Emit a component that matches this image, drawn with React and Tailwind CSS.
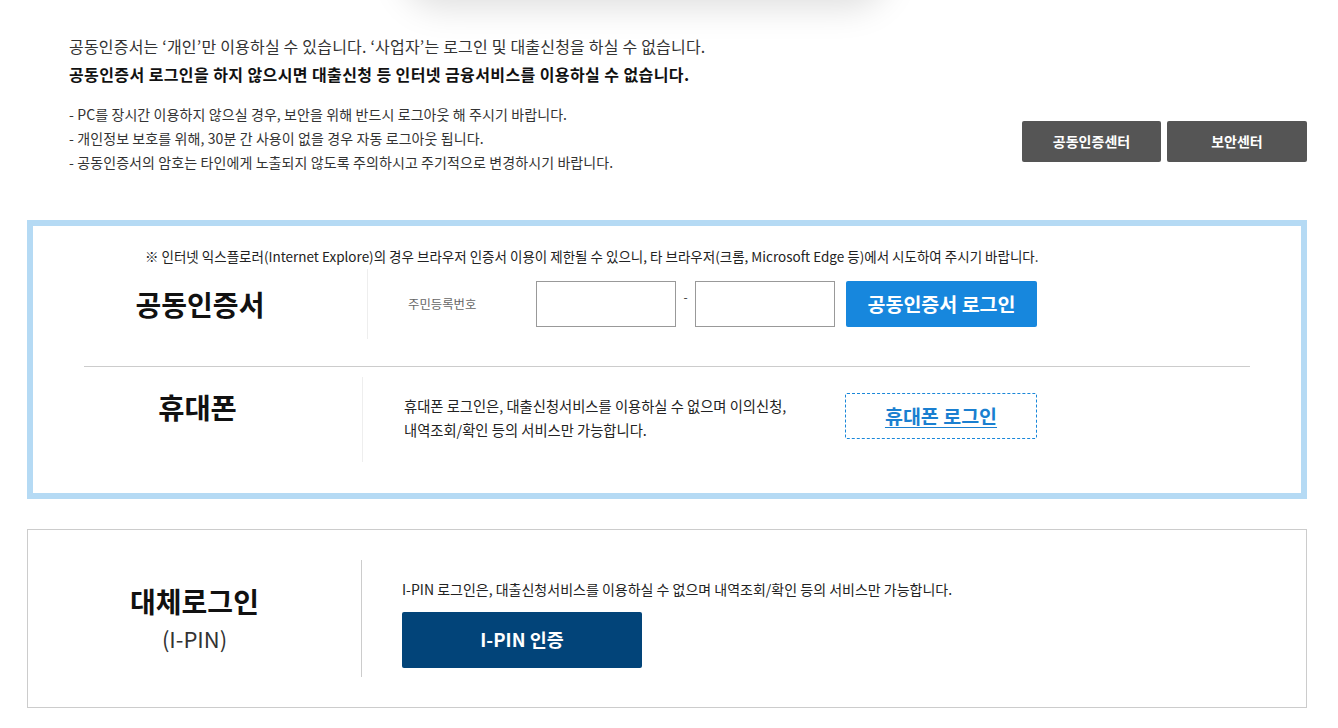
import React from "react";

export default function App() {
  return (
    <div className="relative min-h-screen bg-white overflow-hidden font-['Noto_Sans_CJK_KR','Noto_Sans',sans-serif] text-[#333]">
      {/* shadow of the header layer above */}
      <div className="absolute left-[410px] top-[-60px] w-[470px] h-[60px] rounded-full bg-white shadow-[0_0_34px_8px_rgba(0,0,0,0.13)]" />

      <div className="ml-[27px] w-[1280px]">
        {/* Notice */}
        <div className="flex justify-between pt-[32px] pl-[42px]">
          <div>
            <p className="text-[16px] leading-[28px] tracking-[0.2px] text-[#333]">
              공동인증서는 ‘개인’만 이용하실 수 있습니다. ‘사업자’는 로그인 및 대출신청을 하실 수 없습니다.
            </p>
            <p className="text-[16px] leading-[28px] tracking-[0.4px] font-bold text-[#111]">
              공동인증서 로그인을 하지 않으시면 대출신청 등 인터넷 금융서비스를 이용하실 수 없습니다.
            </p>
            <ul className="mt-[14px] text-[14px] leading-[24px] tracking-[0.1px] text-[#333]">
              <li>- PC를 장시간 이용하지 않으실 경우, 보안을 위해 반드시 로그아웃 해 주시기 바랍니다.</li>
              <li>- 개인정보 보호를 위해, 30분 간 사용이 없을 경우 자동 로그아웃 됩니다.</li>
              <li>- 공동인증서의 암호는 타인에게 노출되지 않도록 주의하시고 주기적으로 변경하시기 바랍니다.</li>
            </ul>
          </div>
          <div className="flex gap-[6px] mt-[89px] self-start">
            <button className="w-[139px] h-[41px] rounded-[2px] bg-[#555] text-white text-[14px] font-bold">
              공동인증센터
            </button>
            <button className="w-[140px] h-[41px] rounded-[2px] bg-[#555] text-white text-[14px] font-bold">
              보안센터
            </button>
          </div>
        </div>

        {/* Certificate / phone login */}
        <div className="mt-[46px] border-[6px] border-[#b5daf4] pb-[31px]">
          <p className="pt-[20px] pl-[112px] text-[13.5px] leading-[20px] text-[#222]">
            ※ 인터넷 익스플로러(Internet Explore)의 경우 브라우저 인증서 이용이 제한될 수 있으니, 타 브라우저(크롬, Microsoft Edge 등)에서 시도하여 주시기 바랍니다.
          </p>

          <div className="flex items-center h-[70px] mt-[3px]">
            <div className="w-[335px] h-full flex items-center justify-center border-r border-[#eee]">
              <h2 className="text-[28px] leading-[36px] font-bold text-[#111]">공동인증서</h2>
            </div>
            <span className="ml-[40px] w-[128px] text-[12.4px] text-[#666]">주민등록번호</span>
            <input className="w-[140px] h-[46px] border border-[#999] outline-none" />
            <span className="w-[19px] self-start mt-[20px] text-center text-[12px] leading-[16px] text-[#333]">-</span>
            <input className="w-[140px] h-[46px] border border-[#999] outline-none" />
            <button className="ml-[11px] w-[191px] h-[46px] rounded-[2px] bg-[#1787dd] text-white text-[19.5px] font-bold">
              공동인증서 로그인
            </button>
          </div>

          <div className="mx-[51px] mt-[27px] border-t border-[#ccc]" />

          <div className="flex items-start h-[85px] mt-[10px]">
            <div className="w-[330px] h-full flex justify-center border-r border-[#eee]">
              <h2 className="mt-[12px] text-[28.5px] leading-[36px] font-bold text-[#111]">휴대폰</h2>
            </div>
            <p className="ml-[41px] w-[441px] mt-[17px] text-[14.3px] leading-[24px] text-[#222]">
              휴대폰 로그인은, 대출신청서비스를 이용하실 수 없으며 이의신청,
              <br />
              내역조회/확인 등의 서비스만 가능합니다.
            </p>
            <button className="mt-[16px] w-[192px] h-[46px] rounded-[2px] border border-dashed border-[#1a87d9] text-[#1a7fd0] text-[19.5px] font-bold underline underline-offset-[3px]">
              휴대폰 로그인
            </button>
          </div>
        </div>

        {/* I-PIN */}
        <div className="mt-[30px] border border-[#ccc] py-[30px] flex">
          <div className="w-[334px] h-[117px] flex flex-col items-center justify-center border-r border-[#ccc]">
            <h2 className="text-[28px] leading-[38px] font-bold text-[#111]">대체로그인</h2>
            <p className="text-[22px] leading-[36px] text-[#333]">(I-PIN)</p>
          </div>
          <div className="ml-[40px] pt-[19px]">
            <p className="text-[14px] leading-[20px] text-[#222]">
              I-PIN 로그인은, 대출신청서비스를 이용하실 수 없으며 내역조회/확인 등의 서비스만 가능합니다.
            </p>
            <button className="mt-[13px] w-[240px] h-[56px] rounded-[2px] bg-[#024479] text-white text-[18.5px] font-bold">
              I-PIN 인증
            </button>
          </div>
        </div>
      </div>
    </div>
  );
}
